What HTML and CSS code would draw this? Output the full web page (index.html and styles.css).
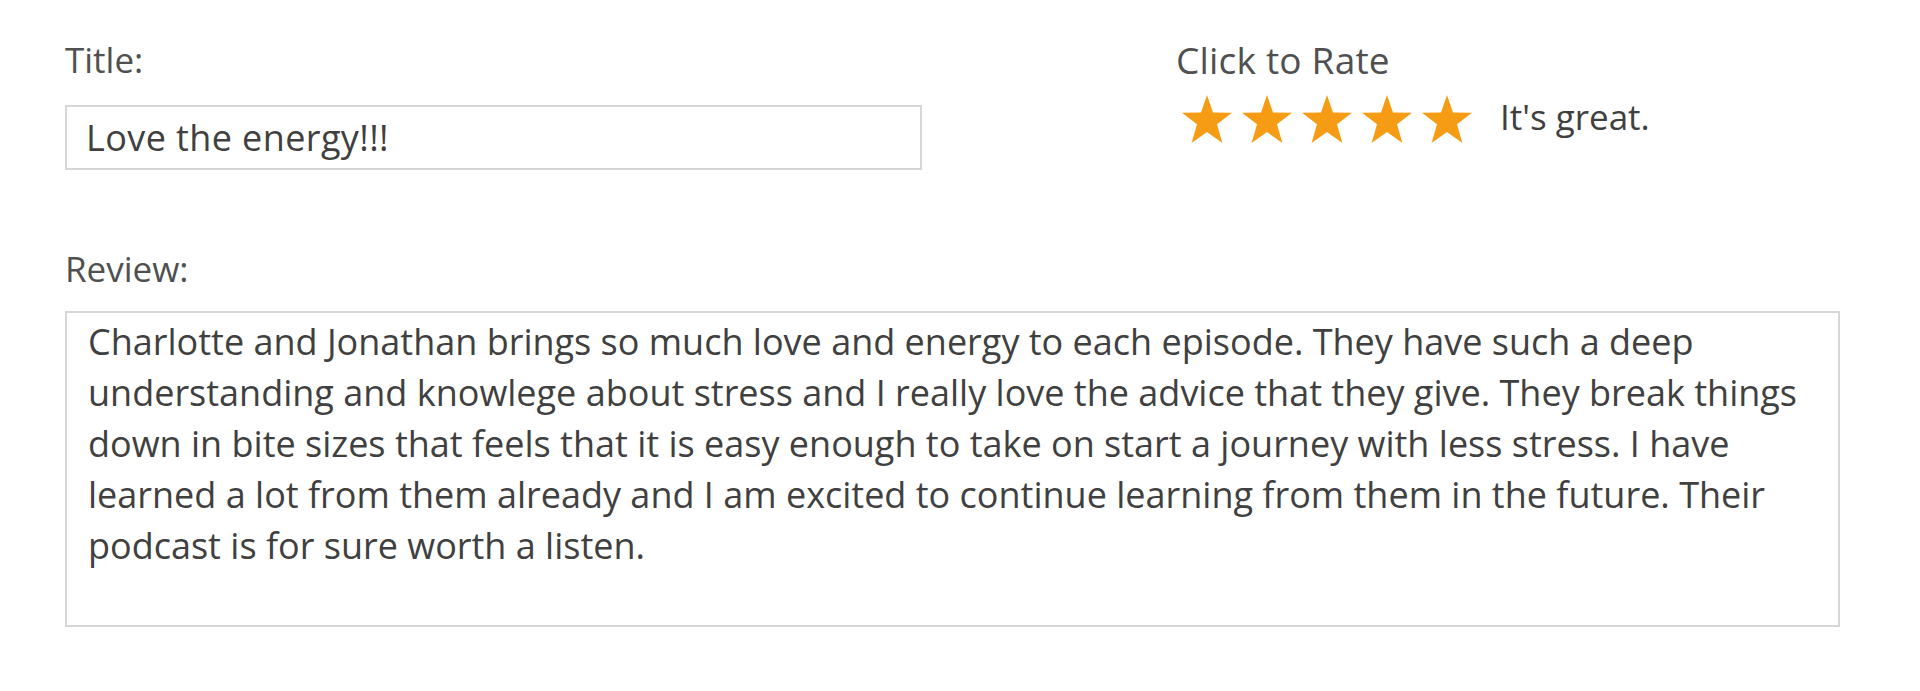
FILE: index.html
```html
<!DOCTYPE html>
<html lang="en">
<head>
<meta charset="utf-8">
<title>Write a review</title>
<link rel="stylesheet" href="styles.css">
</head>
<body>
<main class="page">
  <div class="top-row">
    <div class="title-col">
      <div class="label">Title:</div>
      <div class="field title-field">Love the energy!!!</div>
    </div>
    <div class="rate-col">
      <div class="label rate-label">Click to Rate</div>
      <div class="rating">
        <div class="stars">
          <svg class="star" viewBox="0 0 50 48" aria-hidden="true"><polygon points="25,0 31,17.5 50,17.8 35,29.3 40.4,48 25,37 9.6,48 15,29.3 0,17.8 19,17.5"/></svg>
          <svg class="star" viewBox="0 0 50 48" aria-hidden="true"><polygon points="25,0 31,17.5 50,17.8 35,29.3 40.4,48 25,37 9.6,48 15,29.3 0,17.8 19,17.5"/></svg>
          <svg class="star" viewBox="0 0 50 48" aria-hidden="true"><polygon points="25,0 31,17.5 50,17.8 35,29.3 40.4,48 25,37 9.6,48 15,29.3 0,17.8 19,17.5"/></svg>
          <svg class="star" viewBox="0 0 50 48" aria-hidden="true"><polygon points="25,0 31,17.5 50,17.8 35,29.3 40.4,48 25,37 9.6,48 15,29.3 0,17.8 19,17.5"/></svg>
          <svg class="star" viewBox="0 0 50 48" aria-hidden="true"><polygon points="25,0 31,17.5 50,17.8 35,29.3 40.4,48 25,37 9.6,48 15,29.3 0,17.8 19,17.5"/></svg>
        </div>
        <span class="rating-text">It's great.</span>
      </div>
    </div>
  </div>
  <div class="review-block">
    <div class="label">Review:</div>
    <div class="field review-field">
      <span class="line">Charlotte and Jonathan brings so much love and energy to each episode. They have such a deep</span>
      <span class="line">understanding and knowlege about stress and I really love the advice that they give. They break things</span>
      <span class="line">down in bite sizes that feels that it is easy enough to take on start a journey with less stress. I have</span>
      <span class="line">learned a lot from them already and I am excited to continue learning from them in the future. Their</span>
      <span class="line">podcast is for sure worth a listen.</span>
    </div>
  </div>
</main>
</body>
</html>
```

FILE: styles.css
```css
html, body {
  margin: 0;
  padding: 0;
  background: #ffffff;
}

body {
  font-family: "Open Sans", "Noto Sans", "Liberation Sans", sans-serif;
  color: #444444;
}

.page {
  padding: 38px 0 0 65px;
}

.top-row {
  display: flex;
  align-items: flex-start;
}

.title-col {
  width: 857px;
}

.rate-col {
  margin-left: 254px;
}

.label {
  font-size: 35px;
  line-height: 44px;
  color: #505050;
}

.rate-label {
  font-size: 37px;
  letter-spacing: 0.2px;
}

.field {
  box-sizing: border-box;
  border: 2px solid #d6d6d6;
  background: #ffffff;
  color: #404040;
  font-size: 36px;
}

.title-field {
  margin-top: 23px;
  height: 65px;
  padding: 1px 0 0 19px;
  line-height: 60px;
  letter-spacing: 0.4px;
}

.rating {
  display: flex;
  align-items: flex-start;
  margin-top: 13px;
}

.stars {
  display: flex;
  gap: 10px;
  margin-left: 6px;
}

.star {
  display: block;
  width: 50px;
  height: 48px;
  fill: #f59c14;
}

.rating-text {
  margin-left: 28px;
  font-size: 35px;
  line-height: 43px;
  color: #404040;
}

.review-block {
  margin-top: 77px;
}

.review-field {
  margin-top: 20px;
  width: 1775px;
  height: 316px;
  padding: 3px 20px 0 21px;
  line-height: 51px;
}

.line {
  display: block;
  white-space: nowrap;
}
```
